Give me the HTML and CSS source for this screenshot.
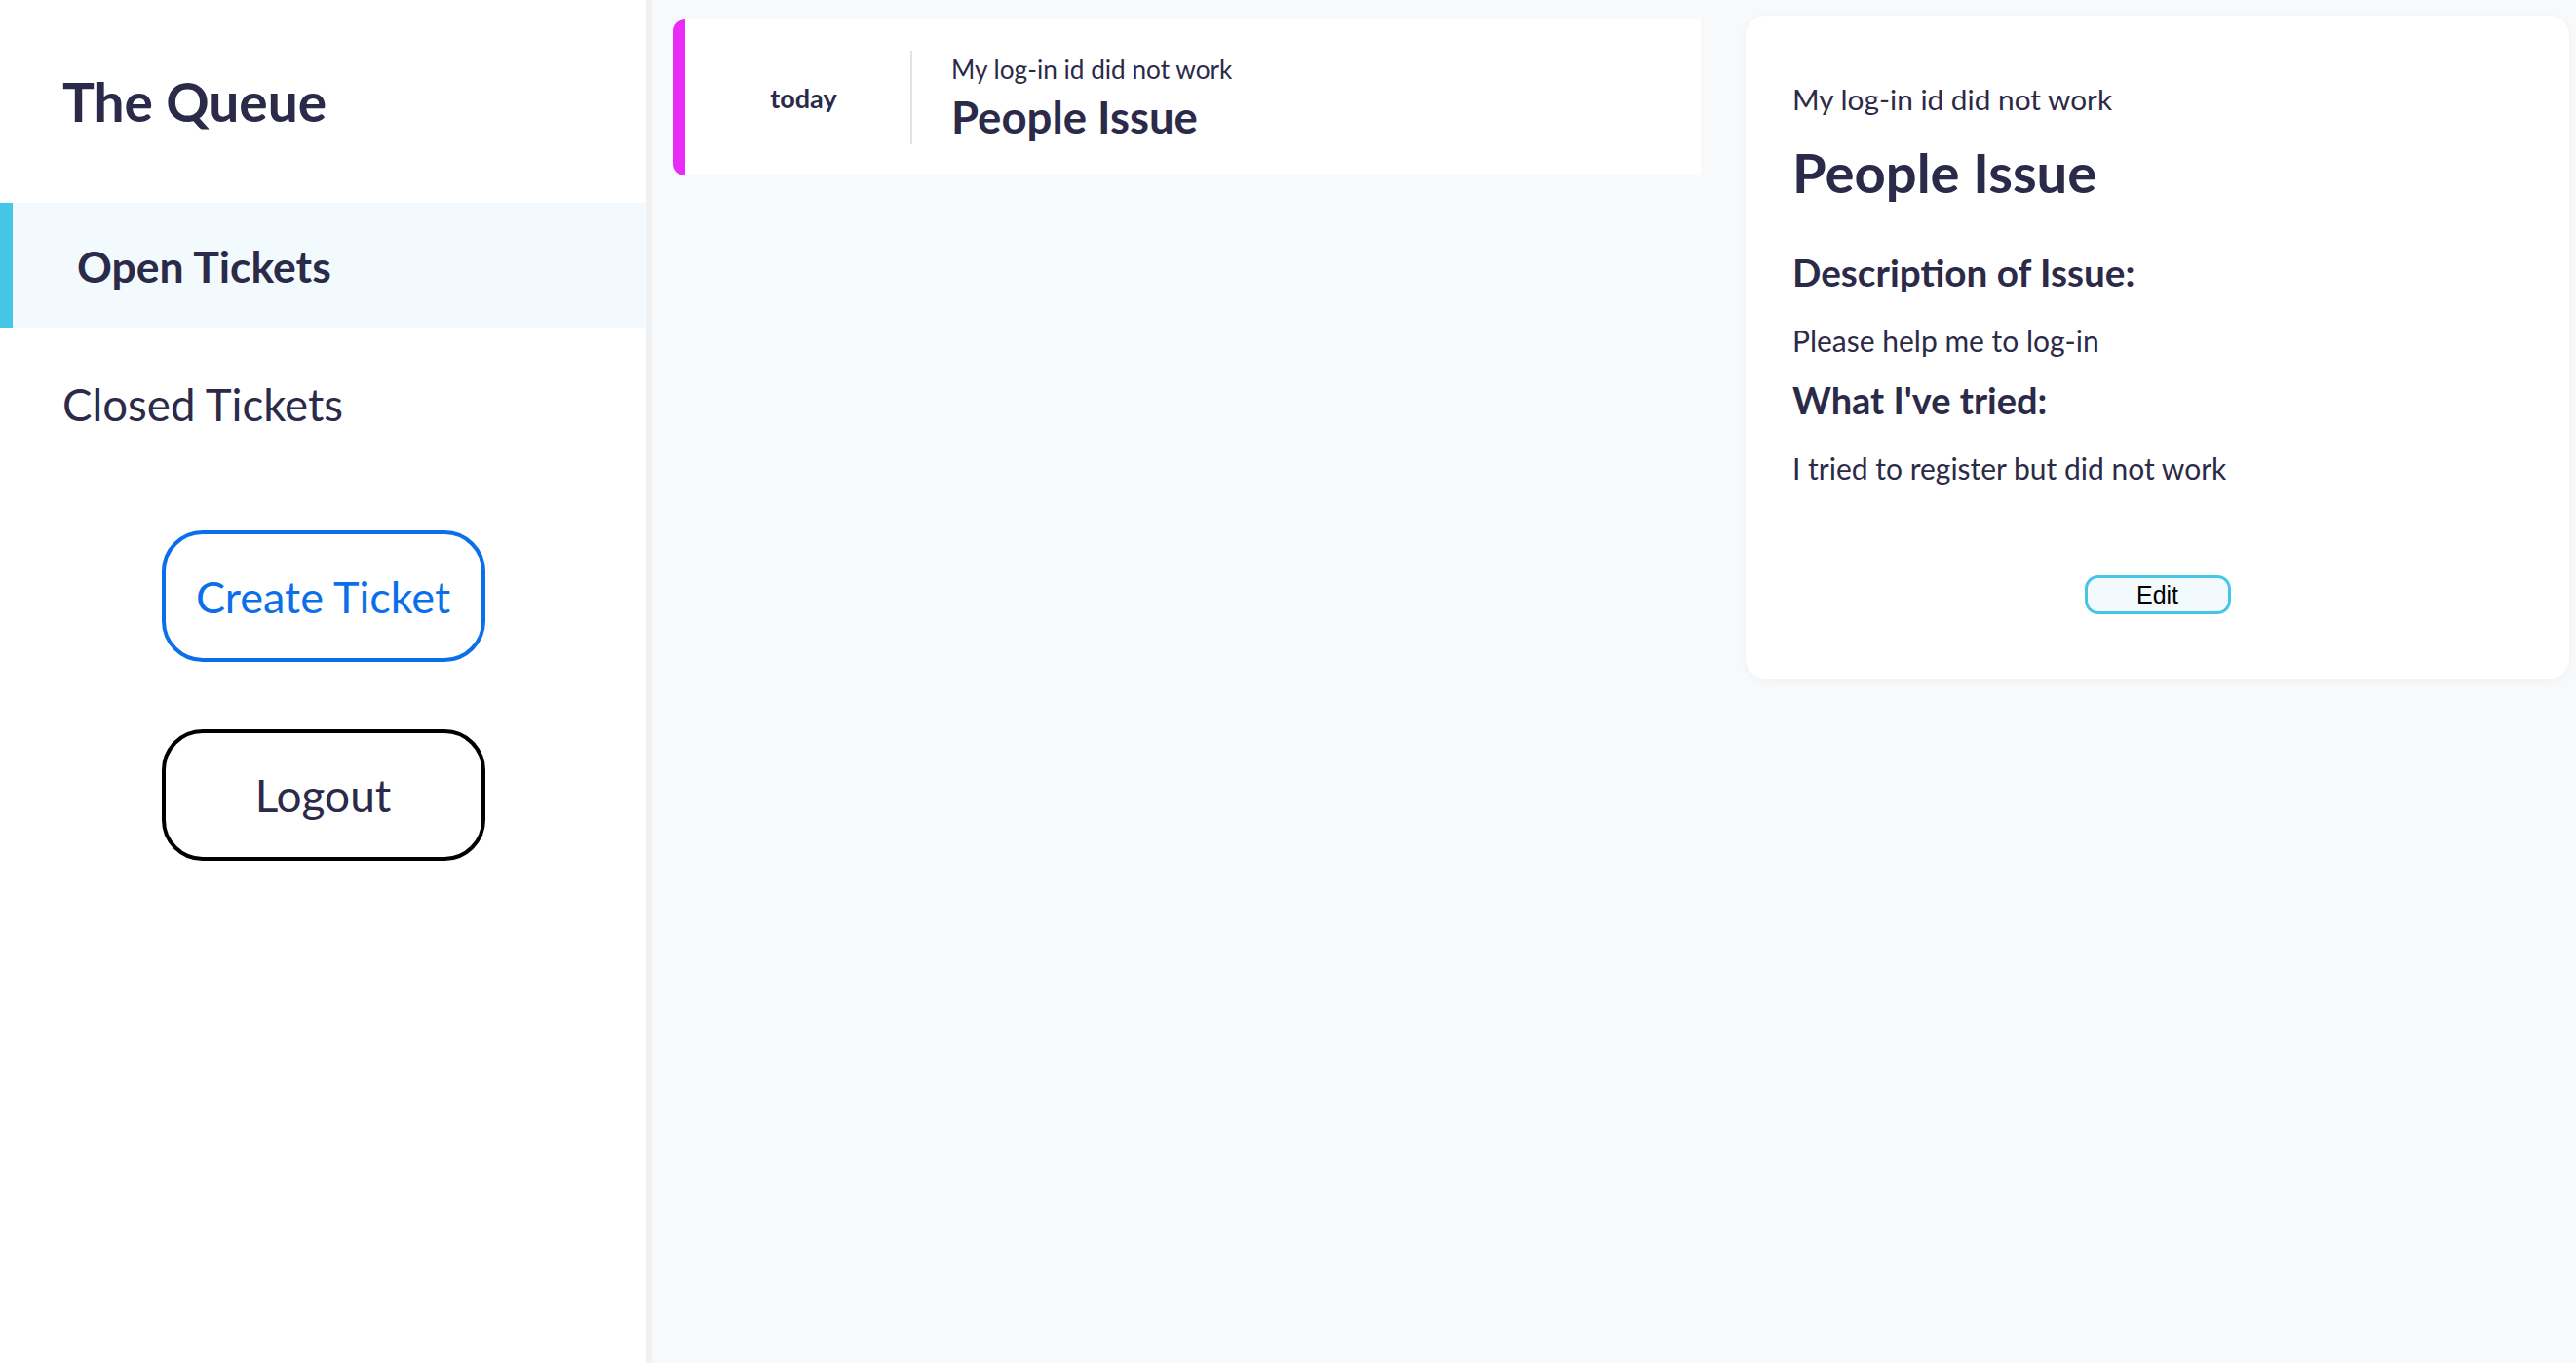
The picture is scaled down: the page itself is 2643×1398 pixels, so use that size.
FILE: index.html
```html
<!DOCTYPE html>
<html lang="en">
<head>
<meta charset="utf-8">
<title>The Queue</title>
<link rel="stylesheet" href="styles.css">
</head>
<body>
<div class="app">
  <aside class="sidebar">
    <div class="brand"><h1 class="brand-title">The Queue</h1></div>
    <nav class="nav">
      <a class="nav-item nav-item-active">Open Tickets</a>
      <a class="nav-item">Closed Tickets</a>
    </nav>
    <div class="actions">
      <button class="btn btn-create">Create Ticket</button>
      <button class="btn btn-logout">Logout</button>
    </div>
  </aside>
  <main class="main">
    <section class="ticket-list">
      <div class="ticket-card">
        <div class="ticket-date">today</div>
        <div class="ticket-info">
          <div class="ticket-subtitle">My log-in id did not work</div>
          <div class="ticket-title">People Issue</div>
        </div>
      </div>
    </section>
    <section class="detail">
      <div class="detail-subtitle">My log-in id did not work</div>
      <h2 class="detail-title">People Issue</h2>
      <h3 class="detail-heading detail-heading-first">Description of Issue:</h3>
      <p class="detail-text">Please help me to log-in</p>
      <h3 class="detail-heading">What I've tried:</h3>
      <p class="detail-text">I tried to register but did not work</p>
      <div class="detail-actions"><button class="btn-edit">Edit</button></div>
    </section>
  </main>
</div>
</body>
</html>
```
FILE: styles.css
```css
html, body {
  margin: 0;
  padding: 0;
}
body {
  font-family: "Lato", "Noto Sans", sans-serif;
  color: #2b2a48;
  background: #f8f9fb;
  width: 2643px;
  height: 1398px;
  overflow: hidden;
}
.app {
  display: flex;
  height: 1398px;
}
.sidebar {
  width: 663px;
  flex: 0 0 663px;
  background: #ffffff;
  border-right: 6px solid #f1f1f2;
  display: flex;
  flex-direction: column;
}
.brand {
  height: 208px;
  display: flex;
  align-items: center;
  padding-left: 64px;
}
.brand-title {
  margin: 0;
  font-size: 55px;
  font-weight: 700;
  line-height: 70px;
  color: #2b2a48;
}
.nav {
  display: flex;
  flex-direction: column;
  gap: 14px;
}
.nav-item {
  height: 128px;
  display: flex;
  align-items: center;
  padding-left: 64px;
  font-size: 45.6px;
  font-weight: 400;
  color: #2b2a48;
}
.nav-item-active {
  background: #f2fafd;
  border-left: 13px solid #45c6e6;
  padding-left: 66px;
  font-size: 44.5px;
  font-weight: 700;
}
.actions {
  display: flex;
  flex-direction: column;
  align-items: center;
  gap: 69px;
  margin-top: 66px;
}
.btn {
  width: 332px;
  height: 135px;
  border-radius: 42px;
  background: #ffffff;
  font-family: "Lato", "Noto Sans", sans-serif;
  font-size: 46px;
  font-weight: 400;
  box-sizing: border-box;
  padding: 0;
}
.btn-create {
  border: 4px solid #0b6fea;
  color: #0b6fea;
  font-size: 45px;
}
.btn-logout {
  border: 4px solid #000000;
  color: #2b2a48;
}
.main {
  flex: 1;
  display: flex;
  align-items: flex-start;
  padding: 16px 7px 0 22px;
  gap: 46px;
}
.ticket-list {
  width: 1054px;
  flex: 0 0 1054px;
  margin-top: 4px;
}
.ticket-card {
  display: flex;
  align-items: center;
  background: #ffffff;
  border-left: 12px solid #e82bf6;
  border-radius: 12px 0 0 12px;
  padding: 32px 0 32px 0;
  height: 96px;
}
.ticket-date {
  width: 219px;
  padding-left: 12px;
  text-align: center;
  font-size: 27px;
  font-weight: 700;
}
.ticket-info {
  border-left: 2px solid #e2e2e4;
  padding-left: 40px;
  height: 96px;
  display: flex;
  flex-direction: column;
}
.ticket-subtitle {
  font-size: 26.2px;
  line-height: 34px;
  margin-top: 2px;
}
.ticket-title {
  font-size: 45.5px;
  font-weight: 700;
  line-height: 56px;
  margin-top: 4px;
}
.detail {
  flex: 1;
  background: #ffffff;
  border-radius: 20px;
  box-shadow: 0 2px 10px rgba(20, 20, 60, 0.04);
  padding: 66px 48px 66px 48px;
}
.detail-subtitle {
  font-size: 29.8px;
  line-height: 40px;
}
.detail-title {
  margin: 20px 0 0 0;
  font-size: 56.2px;
  font-weight: 700;
  line-height: 70px;
}
.detail-heading {
  margin: 16px 0 0 0;
  font-size: 38px;
  font-weight: 700;
  line-height: 50px;
}
.detail-heading-first {
  margin-top: 42px;
  font-size: 38.7px;
}
.detail-text {
  margin: 25px 0 0 0;
  font-size: 30px;
  line-height: 40px;
}
.detail-actions {
  display: flex;
  justify-content: center;
  margin-top: 90px;
}
.btn-edit {
  width: 150px;
  height: 40px;
  box-sizing: border-box;
  border: 3px solid #45c6e6;
  border-radius: 14px;
  background: #f2fafd;
  font-family: "Liberation Sans", Arial, sans-serif;
  font-size: 25px;
  color: #000000;
  padding: 0;
  line-height: 1;
}
```
